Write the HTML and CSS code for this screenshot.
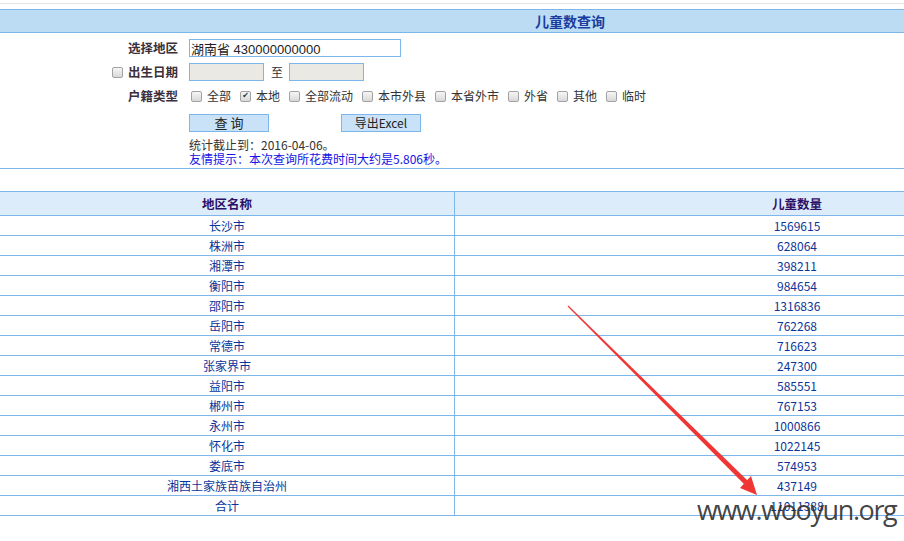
FILE: index.html
```html
<!DOCTYPE html>
<html>
<head>
    <meta charset="utf-8">
    <title>儿童数查询</title>
    <link rel="stylesheet" href="styles.css">
</head>
<body>
    <div class="page">
        <div class="top-line"></div>
        <div class="title-bar">儿童数查询</div>

        <form class="query-form" onsubmit="return false;">
            <div class="form-row">
                <label class="field-label" for="area">选择地区</label>
                <div class="field">
                    <input type="text" id="area" class="area-input" value="湖南省 430000000000">
                </div>
            </div>
            <div class="form-row">
                <label class="field-label"><input type="checkbox" class="cb label-cb">出生日期</label>
                <div class="field">
                    <input type="text" class="date-input" disabled>
                    <span class="to">至</span>
                    <input type="text" class="date-input" disabled>
                </div>
            </div>
            <div class="form-row">
                <span class="field-label">户籍类型</span>
                <div class="field options">
                    <label class="opt"><input type="checkbox" class="cb">全部</label>
                    <label class="opt"><input type="checkbox" class="cb" checked>本地</label>
                    <label class="opt"><input type="checkbox" class="cb">全部流动</label>
                    <label class="opt"><input type="checkbox" class="cb">本市外县</label>
                    <label class="opt"><input type="checkbox" class="cb">本省外市</label>
                    <label class="opt"><input type="checkbox" class="cb">外省</label>
                    <label class="opt"><input type="checkbox" class="cb">其他</label>
                    <label class="opt"><input type="checkbox" class="cb">临时</label>
                </div>
            </div>
            <div class="form-row buttons-row">
                <span class="field-label"></span>
                <div class="field">
                    <button type="submit" class="btn">查 询</button>
                    <button type="button" class="btn btn-excel">导出Excel</button>
                </div>
            </div>
            <div class="notes">
                <div>统计截止到：2016-04-06。</div>
                <div class="hint">友情提示：本次查询所花费时间大约是5.806秒。</div>
            </div>
        </form>

        <table class="result">
            <thead>
                <tr><th class="col-name">地区名称</th><th>儿童数量</th></tr>
            </thead>
            <tbody>
                <tr><td>长沙市</td><td>1569615</td></tr>
                <tr><td>株洲市</td><td>628064</td></tr>
                <tr><td>湘潭市</td><td>398211</td></tr>
                <tr><td>衡阳市</td><td>984654</td></tr>
                <tr><td>邵阳市</td><td>1316836</td></tr>
                <tr><td>岳阳市</td><td>762268</td></tr>
                <tr><td>常德市</td><td>716623</td></tr>
                <tr><td>张家界市</td><td>247300</td></tr>
                <tr><td>益阳市</td><td>585551</td></tr>
                <tr><td>郴州市</td><td>767153</td></tr>
                <tr><td>永州市</td><td>1000866</td></tr>
                <tr><td>怀化市</td><td>1022145</td></tr>
                <tr><td>娄底市</td><td>574953</td></tr>
                <tr><td>湘西土家族苗族自治州</td><td>437149</td></tr>
                <tr><td>合计</td><td>11011388</td></tr>
            </tbody>
        </table>
    </div>

    <!-- screenshot annotation -->
    <svg class="arrow" width="904" height="541" viewBox="0 0 904 541">
        <polygon points="567.6,306.4 568.4,305.6 747.5,480.5 744,484" fill="#f03535"/>
        <polygon points="757,495 740,488 751,476" fill="#f03535"/>
    </svg>
    <div class="watermark">www.wooyun.org</div>
</body>
</html>
```

FILE: styles.css
```css
body {
    margin: 0;
    overflow: hidden;
    background-color: #fff;
    font-family: "Noto Sans CJK SC", sans-serif;
    font-size: 12px;
    color: #333;
}

.page {
    width: 1140px;
    padding-top: 3px;
}

.top-line {
    height: 1px;
    background-color: #e4e4e4;
    margin-bottom: 5px;
}

.title-bar {
    height: 22px;
    line-height: 22px;
    border-top: 1px solid #7cb6ea;
    border-bottom: 1px solid #7cb6ea;
    background-color: #bcdcf4;
    text-align: center;
    font-size: 14px;
    font-weight: bold;
    color: #1b3d9e;
}

.query-form {
    margin: 0;
    padding: 3px 0 2px;
    border-bottom: 1px solid #7cb6ea;
}

.form-row {
    display: flex;
    align-items: center;
    height: 24px;
}

.buttons-row {
    height: 25px;
    margin-top: 2px;
}

.field-label {
    width: 178px;
    margin-right: 11px;
    display: flex;
    justify-content: flex-end;
    align-items: center;
    font-size: 12.5px;
    font-weight: bold;
    color: #3b2f3b;
    line-height: 16px;
}

.field {
    display: flex;
    align-items: center;
}

.area-input {
    box-sizing: border-box;
    width: 212px;
    height: 18px;
    margin: 0;
    padding: 0 1px;
    border: 1px solid #7cb6ea;
    font-family: "Liberation Sans", "Noto Sans CJK SC", sans-serif;
    font-size: 13px;
    color: #222;
    outline: none;
}

.date-input {
    box-sizing: border-box;
    width: 75px;
    height: 18px;
    margin: 0;
    padding: 0;
    border: 1px solid #7cb6ea;
    background-color: #ebe9e4;
}

.to {
    margin: 0 6px 0 7px;
    font-size: 12px;
    line-height: 16px;
}

.cb {
    appearance: none;
    -webkit-appearance: none;
    box-sizing: border-box;
    width: 11px;
    height: 11px;
    margin: 0 5px 0 0;
    border: 1px solid #a2a2a2;
    border-radius: 2px;
    background: linear-gradient(#f6f6f6, #d8d8d8);
    display: inline-grid;
    place-items: center;
}

.cb:checked::after {
    content: "\2714";
    font-family: "DejaVu Sans", sans-serif;
    font-size: 8px;
    line-height: 8px;
    color: #333;
}

.label-cb {
    margin-right: 5px;
}

.options {
    padding-left: 2px;
}

.opt {
    display: flex;
    align-items: center;
    margin-right: 9px;
    font-size: 12px;
    line-height: 16px;
    color: #333;
}

.btn {
    box-sizing: border-box;
    width: 80px;
    height: 18px;
    margin: 0 72px 0 0;
    padding: 0;
    border: 1px solid #7cb6ea;
    background-color: #c9e2f7;
    font-family: "Noto Sans CJK SC", sans-serif;
    font-size: 13px;
    line-height: 16px;
    color: #222;
}

.btn-excel {
    font-size: 12px;
}

.notes {
    margin-top: 3px;
    padding-left: 189px;
    line-height: 14px;
    font-size: 12px;
    color: #333;
}

.hint {
    color: #1414e6;
}

.result {
    width: 100%;
    margin-top: 22px;
    border-collapse: collapse;
}

.result th,
.result td {
    padding: 0;
    border: 1px solid #7cb6ea;
    text-align: center;
}

.result th:first-child,
.result td:first-child {
    border-left: none;
}

.result th {
    height: 23px;
    background-color: #ddecfa;
    font-size: 12.5px;
    font-weight: bold;
    color: #2c0f66;
    line-height: 16px;
}

.result .col-name {
    width: 454px;
}

.result td {
    height: 18px;
    padding-top: 1px;
    font-size: 12px;
    line-height: 16px;
    color: #0a3599;
}

.arrow {
    position: absolute;
    left: 0;
    top: 0;
    pointer-events: none;
}

.watermark {
    position: absolute;
    left: 697px;
    top: 492px;
    font-family: "Open Sans", sans-serif;
    font-size: 27px;
    letter-spacing: -1.4px;
    line-height: 36px;
    color: rgba(50, 50, 50, 0.92);
    pointer-events: none;
}
```
